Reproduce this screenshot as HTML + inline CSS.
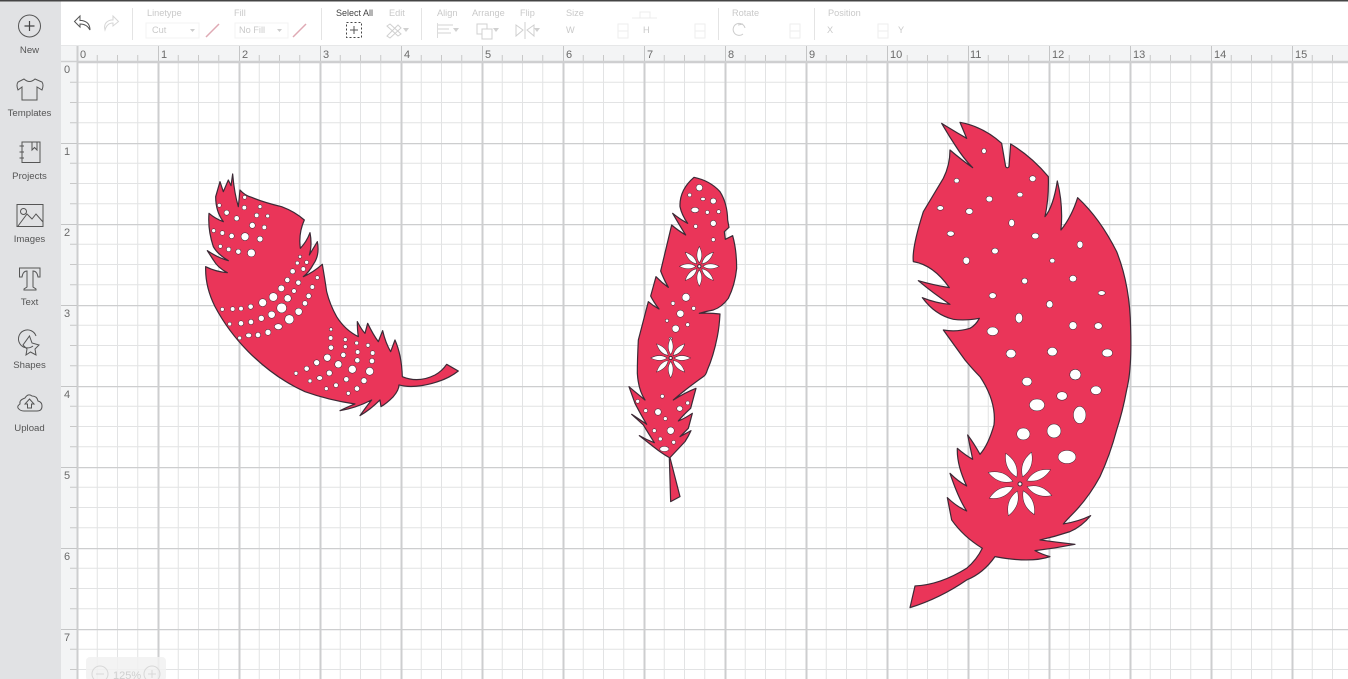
<!DOCTYPE html>
<html><head><meta charset="utf-8"><style>
html,body{margin:0;padding:0;width:1348px;height:679px;overflow:hidden;background:#fff}
svg{display:block}
text{font-family:"Liberation Sans",sans-serif}
.n{font-size:9.6px;fill:#555;text-anchor:middle}
.t{font-size:9.2px;fill:#c9c9c9}
.r{font-size:11px;fill:#6a6a6a}
.i{fill:none;stroke:#555;stroke-width:1}
.g{fill:none;stroke:#d6d6d6;stroke-width:1}
.f{fill:#ea3559;stroke:#3c2a36;stroke-width:3.6;stroke-linejoin:round}
.h circle,.h ellipse,.p{fill:#fff;stroke:#3c2a36;stroke-width:3;paint-order:stroke}
</style></head><body>
<svg width="1348" height="679" viewBox="0 0 1348 679" xmlns="http://www.w3.org/2000/svg">
<defs>
<pattern id="gr" x="76.5" y="62" width="81" height="81" patternUnits="userSpaceOnUse">
<path d="M20.75 0V81M41 0V81M61.25 0V81M0 20.25H81M0 40.5H81M0 60.75H81" stroke="#e2e3e4" stroke-width="1" fill="none"/>
<path d="M1 0V81" stroke="#cdcecf" stroke-width="2" fill="none"/>
<path d="M0 0.5H81" stroke="#cdcecf" stroke-width="1.4" fill="none"/>
</pattern>
<pattern id="tx" x="77" y="53" width="81" height="8" patternUnits="userSpaceOnUse">
<path d="M20.25 2V8M40.5 2V8M60.75 2V8" stroke="#c8c8c8" fill="none"/>
</pattern>
<pattern id="ty" x="70" y="62" width="7" height="81" patternUnits="userSpaceOnUse">
<path d="M0 20.25H7M0 40.5H7M0 60.75H7" stroke="#c8c8c8" fill="none"/>
</pattern>
</defs>
<rect width="1348" height="679" fill="#fff"/>
<rect x="76.5" y="62" width="1272" height="617" fill="url(#gr)"/>
<rect x="61" y="45" width="1287" height="17" fill="#f3f4f5"/>
<rect x="61" y="45" width="16" height="634" fill="#f3f4f5"/>
<rect x="77" y="53" width="1271" height="8" fill="url(#tx)"/>
<rect x="70" y="62" width="7" height="617" fill="url(#ty)"/>
<path d="M61 45.5H1348" stroke="#e4e5e6"/>
<path d="M61 61.5H1348" stroke="#cfd0d1" stroke-width="1.4"/>
<path d="M77.5 45V679" stroke="#cdcecf" stroke-width="2"/>
<path d="M158.5 45V61M239.5 45V61M320.5 45V61M401.5 45V61M482.5 45V61M563.5 45V61M644.5 45V61M725.5 45V61M806.5 45V61M887.5 45V61M968.5 45V61M1049.5 45V61M1130.5 45V61M1211.5 45V61M1292.5 45V61" stroke="#c4c5c6"/>
<path d="M61 143.5H77M61 224.5H77M61 305.5H77M61 386.5H77M61 467.5H77M61 548.5H77M61 629.5H77" stroke="#c4c5c6"/>
<g class="r">
<text x="80" y="58">0</text><text x="161" y="58">1</text><text x="242" y="58">2</text><text x="323" y="58">3</text><text x="404" y="58">4</text><text x="485" y="58">5</text><text x="566" y="58">6</text><text x="647" y="58">7</text><text x="728" y="58">8</text><text x="809" y="58">9</text><text x="890" y="58">10</text><text x="970" y="58">11</text><text x="1052" y="58">12</text><text x="1133" y="58">13</text><text x="1214" y="58">14</text><text x="1295" y="58">15</text>
<text x="64" y="73">0</text><text x="64" y="155">1</text><text x="64" y="236">2</text><text x="64" y="317">3</text><text x="64" y="398">4</text><text x="64" y="479">5</text><text x="64" y="560">6</text><text x="64" y="641">7</text>
</g>

<!-- Feather 1 -->
<g transform="translate(195 165) scale(.3333)">
<path class="f" d="M32 305Q62 320 97 323Q68 308 55 285L37 257Q68 278 100 287Q68 268 55 245Q38 195 42 145Q62 162 85 170Q62 140 62 95L75 50L85 80L100 45L108 62L113 27Q118 85 130 125L135 75Q150 92 170 97Q205 112 260 125Q300 140 328 165Q310 205 316 250Q335 230 345 203Q352 240 343 270L367 230Q375 270 355 298Q342 322 325 335Q355 322 382 298Q390 345 395 380Q405 420 425 455Q450 495 490 515Q487 495 487 470Q500 495 510 505L518 475Q535 510 550 530L563 497Q572 535 587 560L600 525Q620 570 622 635Q670 655 720 630Q742 618 755 598L790 618Q750 650 680 662Q640 668 612 660Q612 675 595 695Q575 715 558 725L555 705Q525 735 495 752Q510 730 530 705Q480 730 435 737Q460 725 480 717Q400 705 330 680Q240 640 160 560Q100 500 60 425Q30 365 32 305Z"/>
<g class="h">
<circle cx="149" cy="97" r="5"/><circle cx="73" cy="121" r="5"/><circle cx="148" cy="128" r="6"/><circle cx="195" cy="125" r="5"/><circle cx="95" cy="143" r="7"/><circle cx="185" cy="151" r="6"/><circle cx="218" cy="153" r="5"/><circle cx="125" cy="160" r="7"/><circle cx="172" cy="181" r="8"/><circle cx="208" cy="187" r="6"/><circle cx="56" cy="197" r="5"/><circle cx="82" cy="204" r="6"/><circle cx="110" cy="213" r="7"/><circle cx="150" cy="215" r="11"/><circle cx="195" cy="222" r="8"/><circle cx="76" cy="244" r="5"/><circle cx="101" cy="253" r="6"/><circle cx="130" cy="260" r="7"/><circle cx="169" cy="264" r="11"/><circle cx="315" cy="275" r="4"/><circle cx="307" cy="294" r="5"/><circle cx="335" cy="292" r="5"/><circle cx="325" cy="312" r="6"/><circle cx="293" cy="319" r="7"/><circle cx="367" cy="338" r="5"/><circle cx="277" cy="345" r="7"/><circle cx="310" cy="353" r="7"/><circle cx="352" cy="366" r="6"/><circle cx="259" cy="370" r="9"/><circle cx="297" cy="378" r="6"/><circle cx="341" cy="393" r="7"/><circle cx="235" cy="396" r="12"/><circle cx="278" cy="400" r="10"/><circle cx="203" cy="413" r="11"/><circle cx="330" cy="415" r="7"/><circle cx="82" cy="433" r="5"/><circle cx="113" cy="432" r="6"/><circle cx="138" cy="431" r="6"/><circle cx="167" cy="425" r="7"/><circle cx="260" cy="429" r="14"/><circle cx="311" cy="440" r="10"/><circle cx="230" cy="449" r="10"/><circle cx="199" cy="460" r="8"/><circle cx="283" cy="463" r="13"/><circle cx="168" cy="471" r="7"/><circle cx="138" cy="475" r="7"/><circle cx="104" cy="477" r="5"/><ellipse cx="250" cy="485" rx="11" ry="8"/><circle cx="219" cy="502" r="8"/><circle cx="189" cy="510" r="7"/><ellipse cx="161" cy="511" rx="8" ry="6"/><circle cx="134" cy="519" r="5"/><circle cx="408" cy="493" r="4"/><circle cx="407" cy="519" r="6"/><circle cx="451" cy="524" r="5"/><circle cx="485" cy="534" r="5"/><circle cx="519" cy="541" r="5"/><circle cx="408" cy="548" r="7"/><circle cx="451" cy="545" r="5"/><circle cx="488" cy="561" r="6"/><circle cx="533" cy="564" r="6"/><circle cx="445" cy="570" r="7"/><circle cx="397" cy="578" r="10"/><circle cx="487" cy="586" r="7"/><circle cx="531" cy="588" r="7"/><circle cx="365" cy="593" r="8"/><circle cx="430" cy="598" r="10"/><circle cx="472" cy="613" r="11"/><circle cx="524" cy="619" r="11"/><circle cx="335" cy="611" r="7"/><circle cx="403" cy="624" r="8"/><circle cx="303" cy="625" r="5"/><ellipse cx="374" cy="639" rx="8" ry="6"/><circle cx="454" cy="643" r="7"/><circle cx="507" cy="647" r="8"/><circle cx="345" cy="648" r="5"/><circle cx="423" cy="661" r="6"/><circle cx="394" cy="671" r="5"/><circle cx="486" cy="671" r="7"/><circle cx="460" cy="685" r="5"/>
</g></g>

<!-- Feather 2 -->
<g transform="translate(620 170) scale(.3333)">
<path class="f" d="M222 22Q270 32 300 65Q322 100 323 150L327 172L313 185L316 208L338 197Q350 240 350 295Q345 345 325 385Q305 412 280 420Q258 424 238 430Q270 428 300 432Q298 470 292 500Q280 560 262 600Q258 615 250 620Q200 655 160 690Q195 668 228 655L212 715Q190 735 175 753Q195 745 217 730L205 775L180 800L213 782Q205 800 195 815L150 863L180 980L152 995L148 863Q125 850 100 830L58 797Q80 810 103 818Q85 790 70 765L35 733Q58 748 80 763Q60 730 45 700L27 650Q50 670 75 690Q55 660 52 610Q52 570 55 510L85 395Q100 408 117 417Q100 395 92 378L108 320Q125 338 145 352Q130 325 122 303L155 165Q172 180 197 195Q175 160 158 130Q180 148 203 160Q185 135 180 110Q178 60 222 22Z"/>
<g class="h">
<circle cx="238" cy="53" r="9"/><circle cx="209" cy="75" r="5"/><ellipse cx="249" cy="87" rx="6" ry="4"/><circle cx="280" cy="93" r="8"/><ellipse cx="225" cy="120" rx="11" ry="7"/><circle cx="262" cy="127" r="5"/><circle cx="296" cy="125" r="5"/><circle cx="280" cy="160" r="8"/><circle cx="227" cy="169" r="5"/><circle cx="280" cy="209" r="5"/><circle cx="198" cy="382" r="11"/><circle cx="159" cy="400" r="5"/><circle cx="221" cy="415" r="5"/><circle cx="181" cy="431" r="10"/><circle cx="141" cy="452" r="4"/><circle cx="203" cy="464" r="5"/><circle cx="167" cy="476" r="10"/><circle cx="152" cy="506" r="4"/><circle cx="127" cy="679" r="5"/><circle cx="53" cy="694" r="5"/><circle cx="77" cy="722" r="5"/><circle cx="203" cy="699" r="5"/><ellipse cx="179" cy="716" rx="8" ry="7"/><circle cx="114" cy="726" r="9"/><circle cx="136" cy="746" r="5"/><circle cx="152" cy="782" r="10"/><circle cx="103" cy="782" r="5"/><circle cx="121" cy="807" r="5"/><circle cx="161" cy="817" r="5"/><ellipse cx="133" cy="837" rx="13" ry="7"/>
</g>
<g>
<g transform="translate(238 289)">
<path class="p" d="M0-12Q-13-32 0-58Q13-32 0-12Z"/>
<path class="p" transform="rotate(45)" d="M0-12Q-13-32 0-58Q13-32 0-12Z"/>
<path class="p" transform="rotate(90)" d="M0-12Q-13-32 0-58Q13-32 0-12Z"/>
<path class="p" transform="rotate(135)" d="M0-12Q-13-32 0-58Q13-32 0-12Z"/>
<path class="p" transform="rotate(180)" d="M0-12Q-13-32 0-58Q13-32 0-12Z"/>
<path class="p" transform="rotate(225)" d="M0-12Q-13-32 0-58Q13-32 0-12Z"/>
<path class="p" transform="rotate(270)" d="M0-12Q-13-32 0-58Q13-32 0-12Z"/>
<path class="p" transform="rotate(315)" d="M0-12Q-13-32 0-58Q13-32 0-12Z"/>
<circle r="5" fill="#fff" stroke="#3c2a36" stroke-width="3"/>
</g>
<g transform="translate(152 564)">
<path class="p" d="M0-12Q-13-32 0-58Q13-32 0-12Z"/>
<path class="p" transform="rotate(45)" d="M0-12Q-13-32 0-58Q13-32 0-12Z"/>
<path class="p" transform="rotate(90)" d="M0-12Q-13-32 0-58Q13-32 0-12Z"/>
<path class="p" transform="rotate(135)" d="M0-12Q-13-32 0-58Q13-32 0-12Z"/>
<path class="p" transform="rotate(180)" d="M0-12Q-13-32 0-58Q13-32 0-12Z"/>
<path class="p" transform="rotate(225)" d="M0-12Q-13-32 0-58Q13-32 0-12Z"/>
<path class="p" transform="rotate(270)" d="M0-12Q-13-32 0-58Q13-32 0-12Z"/>
<path class="p" transform="rotate(315)" d="M0-12Q-13-32 0-58Q13-32 0-12Z"/>
<circle r="5" fill="#fff" stroke="#3c2a36" stroke-width="3"/>
</g>
</g>
</g>

<!-- Feather 3 -->
<g transform="translate(900 115) scale(.3333)">
<path class="f" d="M125 25Q165 50 200 70L180 22Q250 35 305 85Q312 125 317 155Q322 162 327 155L332 87Q395 125 445 185Q447 250 435 305Q460 275 472 198Q490 270 483 345Q515 305 533 248Q600 310 650 410Q690 510 692 640Q696 760 680 825Q668 890 650 945Q630 1020 600 1085Q565 1150 515 1200Q500 1215 490 1227Q535 1220 572 1202Q545 1235 510 1250Q465 1265 420 1275Q470 1282 525 1288Q465 1300 405 1307Q425 1318 450 1325Q390 1345 285 1325Q250 1375 200 1395Q120 1450 30 1478L45 1413Q120 1410 200 1360Q230 1335 247 1300Q190 1265 155 1215L142 1148Q170 1175 200 1188Q175 1150 150 1075Q175 1100 200 1113Q170 1050 172 1000Q195 1020 218 1033L203 960Q222 985 240 1018Q265 990 282 930Q290 860 240 785Q220 765 195 735L130 645Q170 652 210 640Q228 630 238 610Q195 618 160 613Q105 600 67 548Q110 565 150 568Q100 535 55 497Q100 510 148 518Q100 450 40 440Q35 400 70 290Q100 240 130 190Q150 150 150 105Q185 135 218 158Q190 130 165 90Q145 60 125 25Z"/>
<g class="h">
<ellipse cx="252" cy="108" rx="6" ry="7"/><ellipse cx="170" cy="197" rx="7" ry="6"/><ellipse cx="398" cy="191" rx="9" ry="8"/><ellipse cx="268" cy="252" rx="9" ry="8"/><ellipse cx="360" cy="239" rx="8" ry="6"/><ellipse cx="121" cy="279" rx="9" ry="6"/><ellipse cx="208" cy="289" rx="10" ry="8"/><ellipse cx="335" cy="324" rx="8" ry="10"/><ellipse cx="152" cy="356" rx="10" ry="7"/><ellipse cx="406" cy="363" rx="10" ry="8"/><ellipse cx="540" cy="389" rx="8" ry="10"/><ellipse cx="285" cy="408" rx="9" ry="8"/><ellipse cx="199" cy="437" rx="9" ry="10"/><ellipse cx="457" cy="437" rx="7" ry="6"/><ellipse cx="374" cy="498" rx="8" ry="8"/><ellipse cx="519" cy="491" rx="10" ry="9"/><ellipse cx="605" cy="534" rx="10" ry="6"/><ellipse cx="278" cy="542" rx="10" ry="8"/><ellipse cx="449" cy="568" rx="9" ry="10"/><ellipse cx="357" cy="609" rx="10" ry="14"/><ellipse cx="519" cy="632" rx="11" ry="11"/><ellipse cx="595" cy="633" rx="11" ry="9"/><ellipse cx="278" cy="649" rx="16" ry="12"/><ellipse cx="333" cy="716" rx="14" ry="12"/><ellipse cx="457" cy="710" rx="14" ry="12"/><ellipse cx="622" cy="714" rx="15" ry="11"/><ellipse cx="381" cy="800" rx="14" ry="12"/><ellipse cx="526" cy="779" rx="16" ry="15"/><ellipse cx="588" cy="826" rx="15" ry="12"/><ellipse cx="486" cy="843" rx="15" ry="12"/><ellipse cx="411" cy="870" rx="22" ry="17"/><ellipse cx="539" cy="900" rx="18" ry="25"/><ellipse cx="370" cy="957" rx="19" ry="17"/><ellipse cx="462" cy="948" rx="20" ry="20"/><ellipse cx="501" cy="1026" rx="26" ry="19"/>
</g>
<g transform="translate(360 1107)">
<path class="p" transform="rotate(20)" d="M0-24Q-24-60 0-100Q24-60 0-24Z"/>
<path class="p" transform="rotate(65)" d="M0-24Q-24-60 0-100Q24-60 0-24Z"/>
<path class="p" transform="rotate(110)" d="M0-24Q-24-60 0-100Q24-60 0-24Z"/>
<path class="p" transform="rotate(155)" d="M0-24Q-24-60 0-100Q24-60 0-24Z"/>
<path class="p" transform="rotate(200)" d="M0-24Q-24-60 0-100Q24-60 0-24Z"/>
<path class="p" transform="rotate(245)" d="M0-24Q-24-60 0-100Q24-60 0-24Z"/>
<path class="p" transform="rotate(290)" d="M0-24Q-24-60 0-100Q24-60 0-24Z"/>
<path class="p" transform="rotate(335)" d="M0-24Q-24-60 0-100Q24-60 0-24Z"/>
<circle r="6" fill="#fff" stroke="#3c2a36" stroke-width="3"/>
</g>
</g>

<!-- Zoom pill -->
<rect x="86" y="657" width="80" height="24" rx="4" fill="#f1f1f1" opacity=".85"/>
<circle cx="100" cy="674" r="8" fill="none" stroke="#d8d8d8"/><path d="M96 674H104" stroke="#d8d8d8"/>
<circle cx="152" cy="674" r="8" fill="none" stroke="#d8d8d8"/><path d="M148 674H156M152 670V678" stroke="#d8d8d8"/>
<text x="113" y="679" font-size="11" fill="#cfcfcf">125%</text>

<!-- Toolbar -->
<rect x="61" y="0" width="1287" height="45" fill="#fff"/>
<path d="M61 45.5H1348" stroke="#e6e7e8"/>
<path d="M132.500 8V40M321.500 8V40M421.500 8V40M718.500 8V40M814.500 8V40" stroke="#e4e4e4"/>
<path class="i" d="M90 30Q90 22 82 20.500H80V16L74.500 21.500L80 27V24Q87 24 90 30Z"/>
<path class="g" d="M105 30Q103 22 111 20H113V16L118.500 21.500L113 26V23Q107 23 105 30Z"/>
<g class="t">
<text x="147" y="16">Linetype</text><text x="234" y="16">Fill</text>
<text x="336" y="16" style="fill:#444;font-size:9px">Select All</text><text x="389" y="16">Edit</text>
<text x="437" y="16">Align</text><text x="472" y="16">Arrange</text><text x="520" y="16">Flip</text><text x="566" y="16">Size</text><text x="732" y="16">Rotate</text><text x="828" y="16">Position</text>
<text x="152" y="33">Cut</text><text x="239" y="33">No Fill</text><text x="566" y="33">W</text><text x="643" y="33">H</text><text x="827" y="33">X</text><text x="898" y="33">Y</text>
</g>
<rect x="146" y="23" width="53" height="15" fill="none" stroke="#f3f3f3"/><rect x="235" y="23" width="53" height="15" fill="none" stroke="#f3f3f3"/>
<path d="M190 29L195 29L192.500 32Z" fill="#ccc"/><path d="M277 29L282 29L279.500 32Z" fill="#ccc"/>
<path d="M206 37L219 24" stroke="#dfa9b4" stroke-width="1.500"/><path d="M293 37L306 24" stroke="#dfa9b4" stroke-width="1.500"/>
<rect x="346.500" y="22.500" width="15" height="15" fill="none" stroke="#444" stroke-dasharray="2 2"/>
<path d="M354 26V34M350 30H358" stroke="#555"/>
<path class="g" d="M387 36L398 25L401 28L390 38ZM398 36L387 26L390 24L401 34Z" style="stroke:#d0d0d0"/><path d="M403 28L409 28L406 32Z" fill="#d0d0d0"/>
<path d="M438 25H453M438 29H449M438 33H451" stroke="#dcdcdc" stroke-width="1.200"/><path d="M437.500 23V38" stroke="#dcdcdc"/><path d="M453 28L459 28L456 32Z" fill="#d0d0d0"/>
<rect x="477" y="24" width="10" height="10" class="g" style="stroke:#d0d0d0"/><rect x="482" y="29" width="10" height="10" fill="#fff" stroke="#d0d0d0"/><path d="M493 28L499 28L496 32Z" fill="#d0d0d0"/>
<path d="M516 25L523 30L516 36ZM534 25L527 30L534 36ZM525 22V39" class="g" style="stroke:#d0d0d0"/><path d="M534 28L540 28L537 32Z" fill="#d0d0d0"/>
<path d="M618 24H628V38H618ZM618 31H628M695 24H705V38H695ZM695 31H705M790 24H800V38H790ZM790 31H800M878 24H888V38H878ZM878 31H888" class="g" style="stroke:#eeeeee"/>
<path d="M632 18H657M640 18V12H650V18" class="g" style="stroke:#ececec"/>
<path d="M745 28A6 6 0 1 0 743 34M743 24L738 25" class="g" style="stroke:#cccccc"/>

<!-- Sidebar -->
<rect x="0" y="0" width="61" height="679" fill="#e1e2e4"/>
<rect x="0" y="0" width="1348" height="1.500" fill="#454545"/>
<circle class="i" cx="29.500" cy="26" r="11"/><path d="M29.500 21V31M24.500 26H34.500" stroke="#444" stroke-width="1.200"/>
<text class="n" x="29.500" y="53">New</text>
<path class="i" d="M24 79Q29.500 84 35 79L42 82Q44 85 42 90L37 87V100H22V87L18 90Q16 85 18 82Z"/>
<text class="n" x="29.500" y="116">Templates</text>
<path class="i" d="M22 142H40V162.500H22ZM32 142V150L34.500 147.500L37 150V142M19.500 146H24M19.500 152H24M19.500 158H24"/>
<text class="n" x="29.500" y="179">Projects</text>
<rect class="i" x="17" y="204.500" width="26" height="22"/><circle class="i" cx="23.500" cy="211.500" r="3"/><path class="i" d="M18 226L27 214L32 219L36 214L43 222"/>
<text class="n" x="29.500" y="242">Images</text>
<path class="i" d="M19.500 268H40V277H38Q37 271 33 271V287L36 289V290H24V289L27 287V271Q23 271 22 277H19.500Z"/>
<text class="n" x="29.500" y="305">Text</text>
<path class="i" d="M33 346A9 9 0 1 1 36 336M29.500 336L32 343L39 345L35 349L36 355L30.500 352L26 355L27 349L23 345Z"/>
<text class="n" x="29.500" y="368">Shapes</text>
<path class="i" d="M24 411H37Q42 411 42 406Q42 402 38 401Q37 396 32 396Q28 393 25 398Q19 400 20 404Q17 406 18 408Q20 411 24 411ZM29.500 399L34 404H31.500V408H27.500V404H25Z"/>
<text class="n" x="29.500" y="431">Upload</text>
</svg>
</body></html>
